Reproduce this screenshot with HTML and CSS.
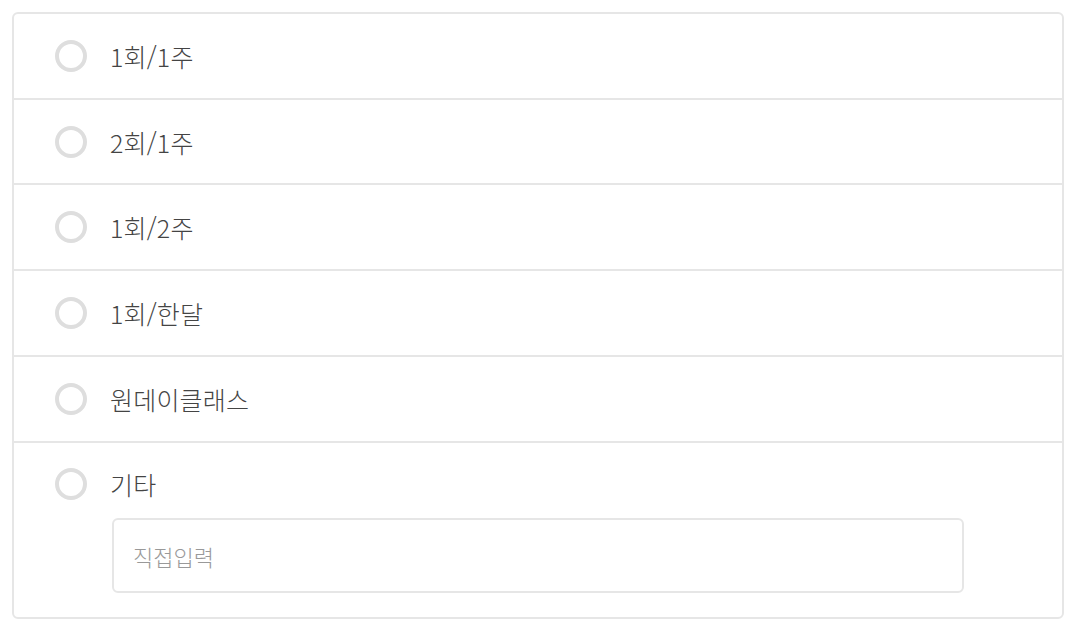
FILE: index.html
```html
<!DOCTYPE html>
<html lang="ko">
<head>
<meta charset="utf-8">
<link rel="stylesheet" href="styles.css">
</head>
<body>
<div class="options">
  <label class="option"><span class="radio"></span><span class="label">1회/1주</span></label>
  <label class="option"><span class="radio"></span><span class="label">2회/1주</span></label>
  <label class="option"><span class="radio"></span><span class="label">1회/2주</span></label>
  <label class="option"><span class="radio"></span><span class="label">1회/한달</span></label>
  <label class="option"><span class="radio"></span><span class="label">원데이클래스</span></label>
  <div class="option option-other">
    <div class="option-head"><span class="radio"></span><span class="label">기타</span></div>
    <input class="other-input" type="text" placeholder="직접입력">
  </div>
</div>
</body>
</html>
```
FILE: styles.css
```css
* { box-sizing: border-box; }
html, body { margin: 0; background: #fff; }
body {
  padding: 12px;
  font-family: "Noto Sans CJK KR", "Noto Sans", sans-serif;
  color: #444;
}
.options {
  width: 1052px;
  border: 2px solid #e6e6e6;
  border-radius: 6px;
  display: flex;
  flex-direction: column;
}
.option {
  display: flex;
  align-items: center;
  height: 85px;
  padding: 0 0 0 41px;
  border-top: 2px solid #e6e6e6;
}
.option:first-child { border-top: none; height: 84px; }
.option:nth-child(3), .option:nth-child(4), .option:nth-child(5) { height: 86px; }
.radio {
  width: 32px;
  height: 32px;
  border: 4px solid #dedede;
  border-radius: 50%;
  flex: none;
}
.label {
  margin-left: 23px;
  font-size: 25px;
  font-weight: 300;
  line-height: 32px;
  letter-spacing: 0.2px;
}
.option-other {
  display: flex;
  flex-direction: column;
  align-items: stretch;
  height: auto;
  padding: 25px 98px 24px 41px;
}
.option-head {
  display: flex;
  align-items: center;
  height: 32px;
}
.other-input {
  margin: 18px 0 0 57px;
  height: 75px;
  border: 2px solid #e6e6e6;
  border-radius: 6px;
  padding: 0 19px;
  font-family: "Noto Sans CJK KR", "Noto Sans", sans-serif;
  font-size: 22px;
  font-weight: 300;
  color: #444;
  outline: none;
}
.other-input::placeholder { color: #999; }
```
